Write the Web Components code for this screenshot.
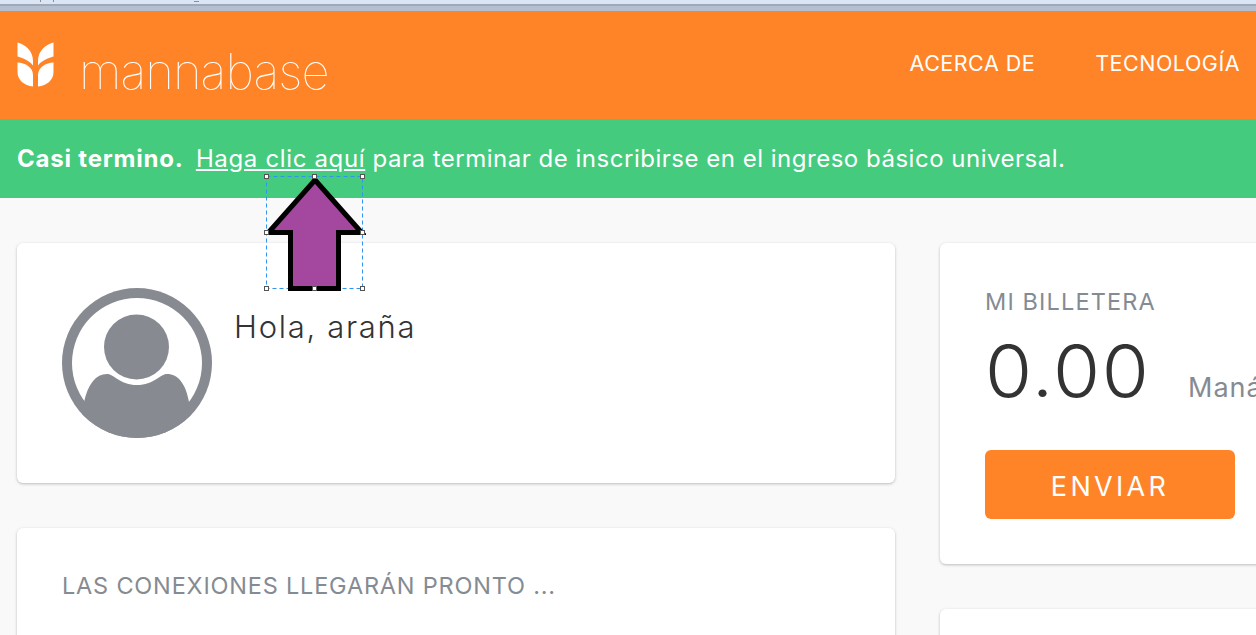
<!DOCTYPE html>
<html>
<head>
<meta charset="utf-8">
<style>
  html, body { margin: 0; height: 100%; overflow: hidden; background: #f9f9f9; }
  body { font-family: "Inter", "Open Sans", sans-serif; }
</style>
</head>
<body>
<mb-chrome></mb-chrome>
<mb-header>
  <mb-nav-link>ACERCA DE</mb-nav-link>
  <mb-nav-link>TECNOLOGÍA</mb-nav-link>
</mb-header>
<mb-banner><b>Casi termino.</b> <a>Haga clic aquí</a> para terminar de inscribirse en el ingreso básico universal.</mb-banner>
<mb-dashboard>
  <div slot="left">
    <mb-card pad="45px 45px" height="240px"><mb-profile name="Hola, araña"></mb-profile></mb-card>
    <mb-card pad="45px 45px" height="200px"><mb-card-title>LAS CONEXIONES LLEGARÁN PRONTO ...</mb-card-title></mb-card>
  </div>
  <div slot="right">
    <mb-card pad="45px 45px" height="321px"><mb-wallet></mb-wallet></mb-card>
    <mb-card pad="45px 45px" height="200px"></mb-card>
  </div>
</mb-dashboard>
<mb-arrow></mb-arrow>

<script>
class MbChrome extends HTMLElement {
  constructor() {
    super();
    this.attachShadow({ mode: "open" });
    this.shadowRoot.innerHTML = `
      <style>
        :host { display: block; height: 11px; background: #b4bfd0; }
        .top { height: 4px; background: #dbe6f5; }
        .line { height: 2px; background: #9fa9b9; }
        svg { display: block; }
      </style>
      <div class="top">
        <svg width="240" height="4" fill="#8a8f96">
          <rect x="40" y="0" width="1" height="2"/><rect x="53" y="0" width="1" height="2"/><rect x="194" y="1" width="5" height="1"/>
        </svg>
      </div>
      <div class="line"></div>
    `;
  }
}
customElements.define("mb-chrome", MbChrome);

class MbHeader extends HTMLElement {
  constructor() {
    super();
    this.attachShadow({ mode: "open" });
    this.shadowRoot.innerHTML = `
      <style>
        :host { display: flex; height: 108px; background: #ff8427; color: #fff; align-items: flex-start; justify-content: space-between; padding-left: 17px; overflow: hidden; }
        .brand { display: flex; align-items: flex-start; }
        svg { display: block; margin-top: 31px; }
        .word { font-family: "Inter", sans-serif; font-weight: 100; font-size: 49px; line-height: 60px; letter-spacing: -0.95px; margin: 31px 0 0 25px; white-space: nowrap; }
        nav { display: flex; gap: 60px; padding: 39px 16px 0 0; }
      </style>
      <div class="brand">
        <svg width="37" height="46" viewBox="0 0 37 46" fill="#fff">
          <path d="M0.500 0.500 C9 3 16 9 16 19 L16 23.500 C12 18 5 16 0.500 14.500 Z"/>
          <path d="M36.500 0.500 C28 3 21 9 21 19 L21 23.500 C25 18 32 16 36.500 14.500 Z"/>
          <path d="M0.500 20.500 C8 21 16 25 16 33 L16 44.500 C7 43.500 0.500 38 0.500 30 Z"/>
          <path d="M36.500 20.500 C29 21 21 25 21 33 L21 44.500 C30 43.500 36.500 38 36.500 30 Z"/>
        </svg>
        <div class="word">mannabase</div>
      </div>
      <nav><slot></slot></nav>
    `;
  }
}
customElements.define("mb-header", MbHeader);

class MbNavLink extends HTMLElement {
  constructor() {
    super();
    this.attachShadow({ mode: "open" });
    this.shadowRoot.innerHTML = `
      <style>
        :host { display: block; font-size: 21.5px; line-height: 26px; letter-spacing: 0.5px; white-space: nowrap; }
      </style>
      <slot></slot>
    `;
  }
}
customElements.define("mb-nav-link", MbNavLink);

class MbBanner extends HTMLElement {
  constructor() {
    super();
    this.attachShadow({ mode: "open" });
    this.shadowRoot.innerHTML = `
      <style>
        :host { display: block; height: 79px; box-sizing: border-box; background: #45cb7d; color: #fff; padding: 26px 17px 0; font-size: 24px; line-height: 28px; letter-spacing: 0.51px; white-space: nowrap; }
        ::slotted(a) { text-decoration: underline; margin-left: 5px; letter-spacing: 0.65px; }
        ::slotted(b) { font-weight: 700; letter-spacing: 0.8px; }
      </style>
      <slot></slot>
    `;
  }
}
customElements.define("mb-banner", MbBanner);

class MbDashboard extends HTMLElement {
  constructor() {
    super();
    this.attachShadow({ mode: "open" });
    this.shadowRoot.innerHTML = `
      <style>
        :host { display: grid; grid-template-columns: 878px 400px; gap: 45px; padding: 45px 0 0 17px; }
        ::slotted(div) { display: flex; flex-direction: column; gap: 45px; }
      </style>
      <slot name="left"></slot>
      <slot name="right"></slot>
    `;
  }
}
customElements.define("mb-dashboard", MbDashboard);

class MbCard extends HTMLElement {
  constructor() {
    super();
    this.attachShadow({ mode: "open" });
    this.shadowRoot.innerHTML = `
      <style>
        :host { display: block; box-sizing: border-box; background: #fff; border-radius: 6px; box-shadow: 0 1px 3px rgba(0,0,0,.25); }
      </style>
      <slot></slot>
    `;
  }
  connectedCallback() {
    this.style.padding = this.getAttribute("pad");
    this.style.height = this.getAttribute("height");
  }
}
customElements.define("mb-card", MbCard);

class MbProfile extends HTMLElement {
  constructor() {
    super();
    this.attachShadow({ mode: "open" });
    this.shadowRoot.innerHTML = `
      <style>
        :host { display: flex; gap: 22px; color: #333; }
        svg { display: block; flex: none; }
        .name { font-size: 31px; line-height: 38px; margin-top: 20px; font-weight: 300; letter-spacing: 1.7px; white-space: nowrap; }
      </style>
      <svg width="150" height="150" viewBox="0 0 150 150">
        <defs><clipPath id="c"><circle cx="75" cy="75" r="75"/></clipPath></defs>
        <circle cx="75" cy="75" r="75" fill="#878b91"/>
        <circle cx="75" cy="75" r="65" fill="#fff"/>
        <g fill="#878b91" clip-path="url(#c)">
          <circle cx="74.500" cy="59" r="32.500"/>
          <path d="M22 114 C26 96 34 86 45 86 C52 86 58 97 75 97 C92 97 98 86 105 86 C116 86 124 96 127 114 L135 150 L15 150 Z"/>
        </g>
      </svg>
      <div class="name"></div>
    `;
  }
  connectedCallback() {
    this.shadowRoot.querySelector(".name").textContent = this.getAttribute("name");
  }
}
customElements.define("mb-profile", MbProfile);

class MbCardTitle extends HTMLElement {
  constructor() {
    super();
    this.attachShadow({ mode: "open" });
    this.shadowRoot.innerHTML = `
      <style>
        :host { display: block; color: #858b92; font-size: 23.5px; line-height: 28px; letter-spacing: 0.8px; margin-top: -1px; white-space: nowrap; }
      </style>
      <slot></slot>
    `;
  }
}
customElements.define("mb-card-title", MbCardTitle);

class MbWallet extends HTMLElement {
  constructor() {
    super();
    this.attachShadow({ mode: "open" });
    this.shadowRoot.innerHTML = `
      <style>
        :host { display: block; white-space: nowrap; }
        .label { color: #858b92; font-size: 23.5px; line-height: 28px; letter-spacing: 1.15px; }
        .row { display: flex; align-items: baseline; margin-top: 11px; color: #333; }
        .amount { display: inline-block; width: 203px; font-size: 72px; line-height: 88px; font-weight: 300; letter-spacing: 1.5px; transform: scaleX(1.06); transform-origin: 0 50%; }
        .unit { color: #858b92; font-size: 27px; letter-spacing: 1px; }
        button { display: block; margin: 35px 0 0 0; padding: 3px 0 0; width: 250px; height: 69px; border: 0; border-radius: 6px; background: #ff8427; color: #fff; font: inherit; font-size: 27px; letter-spacing: 3.3px; }
      </style>
      <div class="label">MI BILLETERA</div>
      <div class="row"><span class="amount">0.00</span><span class="unit">Maná</span></div>
      <button>ENVIAR</button>
    `;
  }
}
customElements.define("mb-wallet", MbWallet);

class MbArrow extends HTMLElement {
  constructor() {
    super();
    this.attachShadow({ mode: "open" });
    this.shadowRoot.innerHTML = `
      <style>
        :host { display: block; position: absolute; left: 264px; top: 174px; width: 102px; height: 118px; }
        svg { display: block; }
      </style>
      <svg width="102" height="118" viewBox="0 0 102 118">
        <rect x="2.500" y="2.500" width="96" height="112" fill="none" stroke="#2f95f0" stroke-dasharray="4 3"/>
        <path d="M51 6 L97.500 58.500 L74.500 58.500 L74.500 114.500 L26.500 114.500 L26.500 58.500 L4.500 58.500 Z" fill="#a4489f" stroke="#000" stroke-width="5"/>
        <g fill="#fff" stroke="#555">
          <rect x="0.500" y="0.500" width="4" height="4"/><rect x="48.500" y="0.500" width="4" height="4"/><rect x="96.500" y="0.500" width="4" height="4"/>
          <rect x="0.500" y="56.500" width="4" height="4"/><rect x="96.500" y="56.500" width="4" height="4"/>
          <rect x="0.500" y="112.500" width="4" height="4"/><rect x="48.500" y="112.500" width="4" height="4"/><rect x="96.500" y="112.500" width="4" height="4"/>
        </g>
      </svg>
    `;
  }
}
customElements.define("mb-arrow", MbArrow);
</script>
</body>
</html>
